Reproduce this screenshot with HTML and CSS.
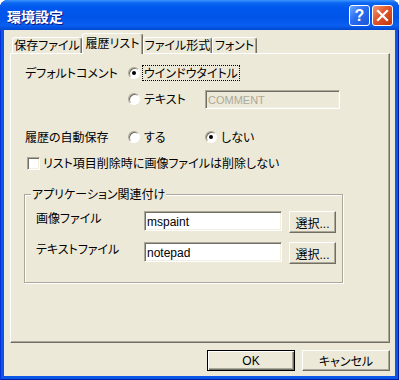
FILE: index.html
```html
<!DOCTYPE html>
<html lang="ja">
<head>
    <meta charset="UTF-8">
    <title>環境設定</title>
    <link rel="stylesheet" href="styles.css">
</head>
<body>
    <div class="window">
        <div class="titlebar">
            <span class="title">環境設定</span>
            <div class="caption-btns">
                <div class="cap help">?</div>
                <div class="cap close">
                    <svg width="13" height="13" viewBox="0 0 13 13">
                        <path d="M2 2 L11 11 M11 2 L2 11" stroke="#fff" stroke-width="2.2" stroke-linecap="square"/>
                    </svg>
                </div>
            </div>
        </div>

        <div class="client">
            <div class="tabs">
                <div class="tab t1">保存ファイル</div>
                <div class="tab t2 active">履歴リスト</div>
                <div class="tab t3">ファイル形式</div>
                <div class="tab t4">フォント</div>
            </div>

            <div class="panel">
                <div class="row">
                    <span class="caption">デフォルトコメント</span>
                    <span class="radio on"></span>
                    <span class="opt-label focus">ウインドウタイトル</span>
                </div>
                <div class="row">
                    <span class="caption"></span>
                    <div class="opt">
                        <span class="radio"></span>
                        <span class="opt-label">テキスト</span>
                    </div>
                    <input class="field disabled comment" type="text" value="COMMENT" disabled>
                </div>
                <div class="row gap-big">
                    <span class="caption">履歴の自動保存</span>
                    <div class="opt">
                        <span class="radio"></span>
                        <span class="opt-label">する</span>
                    </div>
                    <span class="radio on"></span>
                    <span class="opt-label">しない</span>
                </div>
                <div class="row check-row">
                    <span class="checkbox"></span>
                    <span class="opt-label">リスト項目削除時に画像ファイルは削除しない</span>
                </div>

                <div class="group">
                    <span class="legend">アプリケーション関連付け</span>
                    <div class="group-row first">
                        <span class="group-label">画像ファイル</span>
                        <input class="field path" type="text" value="mspaint">
                        <button class="btn pick">選択...</button>
                    </div>
                    <div class="group-row">
                        <span class="group-label">テキストファイル</span>
                        <input class="field path" type="text" value="notepad">
                        <button class="btn pick">選択...</button>
                    </div>
                </div>
            </div>

            <div class="buttons">
                <button class="btn big default">OK</button>
                <button class="btn big">キャンセル</button>
            </div>
        </div>
    </div>
</body>
</html>
```
FILE: styles.css
```css
body {
    margin: 0;
    background: #ffffff;
    font-family: "Liberation Sans", "Noto Sans CJK JP", sans-serif;
    font-size: 12px;
    font-feature-settings: "palt";
    color: #000;
}

.window {
    width: 399px;
    height: 380px;
    box-sizing: border-box;
    padding: 0 4px 4px;
    background: #0a56e6;
    border-radius: 8px 8px 0 0;
    box-shadow: inset 1px 0 #0831d9, inset -1px -1px #001ea0;
    display: flex;
    flex-direction: column;
}

.titlebar {
    height: 30px;
    margin: 0 -4px;
    padding: 1px 6px 0 7px;
    box-sizing: border-box;
    display: flex;
    align-items: center;
    justify-content: space-between;
    border-radius: 8px 8px 0 0;
    background: linear-gradient(#3d95ff 0, #0a66f0 10%, #0058ee 25%, #0054e8 60%, #0a5ef0 85%, #0048d0 100%);
}

.title {
    color: #fff;
    font-family: "Noto Sans CJK JP", sans-serif;
    font-weight: bold;
    font-size: 14px;
    line-height: 16px;
    text-shadow: 1px 1px #0a1883;
}

.caption-btns {
    display: flex;
    gap: 2px;
}

.cap {
    width: 21px;
    height: 21px;
    box-sizing: border-box;
    border: 1px solid #fff;
    border-radius: 3px;
    display: flex;
    align-items: center;
    justify-content: center;
    color: #fff;
    font-family: "Liberation Sans", sans-serif;
    font-weight: bold;
    font-size: 16px;
}

.help {
    background: linear-gradient(135deg, #6aa6ff 0, #2a6cf0 45%, #1c56d8 100%);
}

.close {
    background: linear-gradient(135deg, #f09a78 0, #e0542a 45%, #c2360e 100%);
}

.client {
    flex: 1;
    background: #ece9d8;
    padding: 3px 6px 0;
    display: flex;
    flex-direction: column;
}

/* tabs */
.tabs {
    display: flex;
    align-items: flex-end;
    height: 21px;
    margin-bottom: -1px;
    padding-left: 2px;
}

.tab {
    box-sizing: border-box;
    height: 16px;
    margin-bottom: 1px;
    border: 1px solid;
    border-bottom: none;
    border-color: #fff #716f64 #fff #fff;
    border-radius: 3px 3px 0 0;
    box-shadow: inset -1px 0 #aca899;
    font-family: "Noto Sans CJK JP", sans-serif;
    line-height: 14px;
    text-align: center;
    background: #ece9d8;
}

.t1 { width: 70px; }
.t2 { width: 61px; }
.t3 { width: 69px; }
.t4 { width: 45px; }

.tab.active {
    height: 21px;
    margin-bottom: 0;
    line-height: 17px;
    position: relative;
    z-index: 1;
}

.panel {
    width: 380px;
    height: 290px;
    box-sizing: border-box;
    border: 1px solid;
    border-color: #fff #716f64 #716f64 #fff;
    box-shadow: inset -1px -1px #aca899;
    padding: 9px 0 0 14px;
    font-family: "Noto Sans CJK JP", sans-serif;
}

.row {
    display: flex;
    align-items: center;
    height: 20px;
    margin-top: 6px;
}

.row:first-child {
    margin-top: 0;
}

.row.gap-big {
    margin-top: 18px;
}

.caption {
    width: 103px;
    flex: none;
    line-height: 14px;
}

.opt {
    width: 77px;
    display: flex;
    align-items: center;
}

.opt-label {
    line-height: 14px;
    padding: 0 1px;
}

.focus {
    outline: 1px dotted #000;
    outline-offset: 0;
}

.radio {
    width: 12px;
    height: 12px;
    box-sizing: border-box;
    flex: none;
    border-radius: 50%;
    border: 1px solid;
    border-color: #aca899 #fff #fff #aca899;
    box-shadow: inset 1px 1px #716f64;
    background: #fff;
    display: inline-flex;
    align-items: center;
    justify-content: center;
    margin-right: 3px;
}

.radio.on::after {
    content: "";
    width: 4px;
    height: 4px;
    border-radius: 50%;
    background: #000;
}

.check-row {
    padding-left: 2px;
}

.checkbox {
    width: 13px;
    height: 13px;
    box-sizing: border-box;
    flex: none;
    border: 1px solid;
    border-color: #aca899 #fff #fff #aca899;
    box-shadow: inset 1px 1px #716f64, inset -1px -1px #f1efe2;
    background: #fff;
    margin-right: 2px;
}

.field {
    box-sizing: border-box;
    height: 20px;
    border: 1px solid;
    border-color: #aca899 #fff #fff #aca899;
    box-shadow: inset 1px 1px #716f64, inset -1px -1px #f1efe2;
    background: #fff;
    padding: 1px 2px 0;
    margin: 0;
    font-family: "Liberation Sans", sans-serif;
    font-size: 12px;
    color: #000;
    outline: none;
}

.comment {
    width: 135px;
    height: 19px;
    font-size: 11px;
}

.field.disabled {
    background: #ece9d8;
    color: #aca899;
    -webkit-text-fill-color: #aca899;
}

/* application group */
.group {
    width: 319px;
    height: 89px;
    box-sizing: border-box;
    margin: 21px 0 0 -1px;
    border: 1px solid #aca899;
    box-shadow: inset 1px 1px #fff, 1px 1px #fff;
    padding-left: 11px;
}

.legend {
    display: table;
    margin: -8px 0 0 -5px;
    padding: 0 1px;
    line-height: 14px;
    background: #ece9d8;
}

.group-row {
    display: flex;
    align-items: flex-start;
    margin-top: 9px;
}

.group-row.first {
    margin-top: 10px;
}

.group-label {
    width: 108px;
    line-height: 14px;
    flex: none;
}

.path {
    width: 138px;
    margin-right: 7px;
}

.btn {
    box-sizing: border-box;
    background: #ece9d8;
    border: 1px solid;
    border-color: #fff #716f64 #716f64 #fff;
    box-shadow: inset -1px -1px #aca899;
    padding: 0;
    margin: 0;
    font-family: "Liberation Sans", "Noto Sans CJK JP", sans-serif;
    font-size: 12px;
    font-feature-settings: "palt";
    color: #000;
}

.pick {
    width: 47px;
    height: 22px;
}

.buttons {
    width: 380px;
    margin-top: 7px;
    display: flex;
    justify-content: flex-end;
    gap: 7px;
}

.big {
    width: 88px;
    height: 21px;
}

.btn.default {
    border-color: #000;
    box-shadow: inset 1px 1px #fff, inset -1px -1px #716f64, inset -2px -2px #aca899;
}
```
